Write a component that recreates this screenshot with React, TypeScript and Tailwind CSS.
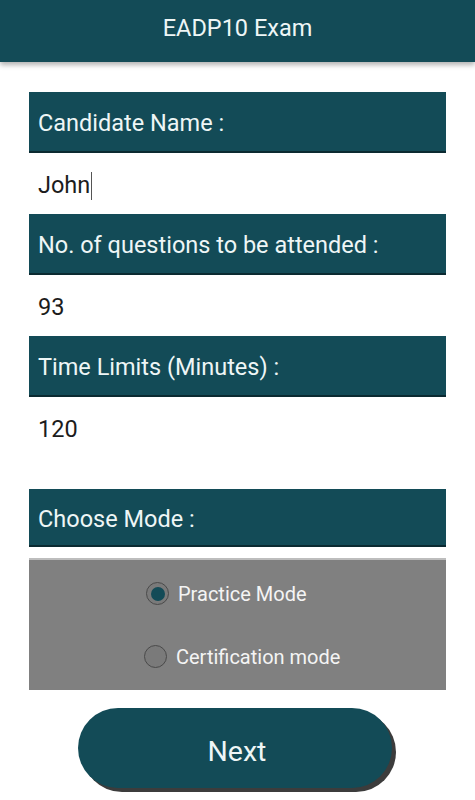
import React from "react";

function Label({ text, h = "h-[61px]" }: { text: string; h?: string }) {
  return (
    <div className={`${h} bg-[#134b57] border-b-2 border-[#0b2a31] flex items-center pl-[9px] pt-[5px]`}>
      <span className="text-[23.5px] text-[#eef6f6]">{text}</span>
    </div>
  );
}

function Value({ text, caret = false }: { text: string; caret?: boolean }) {
  return (
    <div className="h-[61px] flex items-center pl-[9px] pt-[4px]">
      <span className="text-[23.5px] text-[#1c1c1c] leading-none">{text}</span>
      {caret && <span className="w-px h-[28px] bg-[#555] ml-px" />}
    </div>
  );
}

function Radio({ checked, label }: { checked: boolean; label: string }) {
  return (
    <div className="flex items-center gap-[9px] h-[30px]">
      <span className="w-[23px] h-[23px] rounded-full border-[1.5px] border-[#4a4a4a] flex items-center justify-center bg-[#7a7a7a]">
        {checked && <span className="w-[14px] h-[14px] rounded-full bg-[#134b57]" />}
      </span>
      <span className="text-[20px] text-[#f4f4f4]">{label}</span>
    </div>
  );
}

export default function App() {
  return (
    <div className="w-[475px] h-[800px] bg-white overflow-hidden" style={{ fontFamily: "Roboto, 'Noto Sans', sans-serif" }}>
      <div className="h-[62px] bg-[#134b57] flex items-center justify-center shadow-[0_3px_5px_rgba(0,0,0,0.3)] relative z-10">
        <span className="text-[23.5px] text-[#eef6f6] -mt-[5px]">EADP10 Exam</span>
      </div>
      <div className="px-[29px] pt-[30px]">
        <Label text="Candidate Name :" />
        <Value text="John" caret />
        <Label text="No. of questions to be attended :" />
        <Value text="93" />
        <Label text="Time Limits (Minutes) :" />
        <Value text="120" />
        <div className="h-[31px]" />
        <Label text="Choose Mode :" h="h-[58px]" />
        <div className="h-[11px]" />
        <div className="h-[132px] bg-[#808080] border-t-2 border-[#bdbdbd] flex flex-col items-start justify-center gap-[33px] pl-[115px]">
          <div className="ml-[2px]"><Radio checked label="Practice Mode" /></div>
          <Radio checked={false} label="Certification mode" />
        </div>
        <div className="flex justify-center pt-[18px]">
          <button className="w-[314px] h-[80px] rounded-full bg-[#134b57] shadow-[4px_4px_0_#3c3c3c] text-[28.5px] text-[#eef6f6] ml-[-5px] pt-[8px] pl-[4px]">
            Next
          </button>
        </div>
      </div>
    </div>
  );
}
